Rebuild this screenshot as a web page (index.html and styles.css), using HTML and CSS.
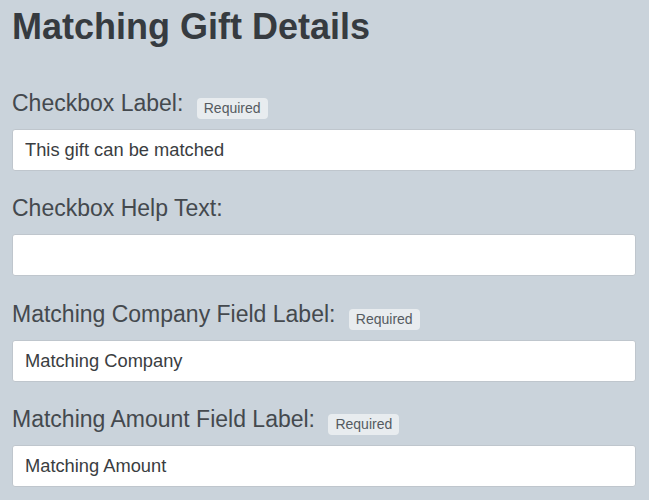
FILE: index.html
```html
<!DOCTYPE html>
<html lang="en">
<head>
<meta charset="utf-8">
<title>Matching Gift Details</title>
<link rel="stylesheet" href="styles.css">
</head>
<body>
<main class="page">
  <h1 class="title">Matching Gift Details</h1>
  <div class="group">
    <label class="label" for="f1">Checkbox Label: <span class="badge">Required</span></label>
    <input class="input" id="f1" type="text" value="This gift can be matched">
  </div>
  <div class="group">
    <label class="label" for="f2">Checkbox Help Text:</label>
    <input class="input" id="f2" type="text" value="">
  </div>
  <div class="group">
    <label class="label" for="f3">Matching Company Field Label: <span class="badge">Required</span></label>
    <input class="input" id="f3" type="text" value="Matching Company">
  </div>
  <div class="group">
    <label class="label" for="f4">Matching Amount Field Label: <span class="badge">Required</span></label>
    <input class="input" id="f4" type="text" value="Matching Amount">
  </div>
</main>
</body>
</html>
```
FILE: styles.css
```css
html, body {
  margin: 0;
  padding: 0;
  background: #cad3db;
}
body {
  font-family: "Liberation Sans", Arial, sans-serif;
  color: #43484d;
}
.page {
  padding: 5px 13px 0 12px;
}
.title {
  margin: 0 0 41px 0;
  font-size: 36px;
  line-height: 43px;
  font-weight: bold;
  color: #363b40;
}
.group {
  margin-bottom: 23.3px;
}
.label {
  display: block;
  height: 28px;
  font-size: 23px;
  line-height: 28px;
  margin-bottom: 12px;
  color: #44494e;
  white-space: nowrap;
}
.badge {
  display: inline-block;
  margin-left: 7px;
  padding: 3px 7px;
  font-size: 14px;
  line-height: 15px;
  background: #e8ecef;
  color: #555b61;
  border-radius: 4px;
  vertical-align: -2px;
}
.input {
  display: block;
  box-sizing: border-box;
  width: 100%;
  height: 42px;
  margin: 0;
  padding: 0 12px;
  font-family: "Liberation Sans", Arial, sans-serif;
  font-size: 18.3px;
  color: #3a3d41;
  background: #ffffff;
  border: 1px solid #bfc6cd;
  border-radius: 3px;
  outline: none;
}
```
